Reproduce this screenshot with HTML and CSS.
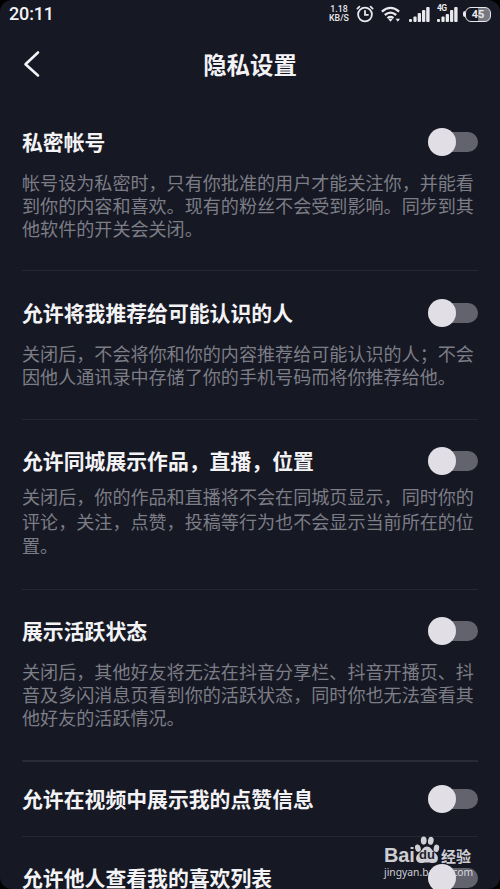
FILE: index.html
```
<!DOCTYPE html>
<html lang="zh-CN">
<head>
<meta charset="utf-8">
<title>隐私设置</title>
<link rel="stylesheet" href="styles.css">
</head>
<body>
<div class="screen">
  <header class="status">
    <span class="time">20:11</span>
    <div class="indicators">
      <span class="speed"><span>1.18</span><span>KB/S</span></span>
      <svg class="alarm" width="18" height="18" viewBox="0 0 18 18" fill="none" stroke="currentColor" stroke-width="1.8" stroke-linecap="round"><circle cx="9" cy="9.5" r="6.9"/><path d="M9 5.8v4h3M1.4 3.6l2-1.9M16.6 3.6l-2-1.9"/></svg>
      <svg class="wifi" width="20" height="17" viewBox="0 0 20 17" fill="none" stroke="currentColor" stroke-width="2.3"><path d="M.9 5.6Q9.5-1.9 18.1 5.6M3.8 9Q9.5 4.2 15.2 9M6.5 12.1Q9.5 9.8 12.5 12.1"/><path d="M7.4 13.3Q9.5 12 11.6 13.3L9.5 15.7zM14.6 12.8h4.4l-2.2 3z" fill="currentColor" stroke="none"/></svg>
      <svg class="signal" width="21" height="17" viewBox="0 0 21 17" fill="currentColor"><rect y="13" width="3" height="3" rx="1"/><rect x="4.4" y="10.5" width="3.2" height="5.5" rx="1"/><rect x="8.7" y="7" width="3.3" height="9" rx="1"/><rect x="13" y="4" width="3.3" height="12" rx="1"/><rect x="17.2" y="1" width="3.4" height="15" rx="1"/></svg>
      <span class="mobile"><svg width="21" height="17" viewBox="0 0 21 17" fill="currentColor"><rect y="13" width="3" height="3" rx="1"/><rect x="4.4" y="10.5" width="3.2" height="5.5" rx="1"/><rect x="8.7" y="8" width="3.3" height="8" rx="1"/><rect x="13" y="4" width="3.3" height="12" rx="1"/><rect x="17.2" y="1" width="3.4" height="15" rx="1"/></svg><b class="net">4G</b></span>
      <span class="battery"><i class="nub"></i><b class="level">45</b></span>
    </div>
  </header>
  <nav class="nav">
    <svg class="back" width="18" height="28" viewBox="0 0 18 28" fill="none" stroke="currentColor" stroke-width="2.6" stroke-linecap="round" stroke-linejoin="round"><path d="M15 2.5L2.5 14.3L15 25.5"/></svg>
    <h1>隐私设置</h1>
  </nav>
  <main>
    <section class="item first">
      <div class="row"><h2>私密帐号</h2><span class="switch"></span></div>
      <p>帐号设为私密时，只有你批准的用户才能关注你，并能看<br>到你的内容和喜欢。现有的粉丝不会受到影响。同步到其<br>他软件的开关会关闭。</p>
    </section>
    <section class="item">
      <div class="row"><h2>允许将我推荐给可能认识的人</h2><span class="switch"></span></div>
      <p>关闭后，不会将你和你的内容推荐给可能认识的人；不会<br>因他人通讯录中存储了你的手机号码而将你推荐给他。</p>
    </section>
    <section class="item loose">
      <div class="row"><h2>允许同城展示作品，直播，位置</h2><span class="switch"></span></div>
      <p>关闭后，你的作品和直播将不会在同城页显示，同时你的<br>评论，关注，点赞，投稿等行为也不会显示当前所在的位<br>置。</p>
    </section>
    <section class="item strong">
      <div class="row"><h2>展示活跃状态</h2><span class="switch"></span></div>
      <p>关闭后，其他好友将无法在抖音分享栏、抖音开播页、抖<br>音及多闪消息页看到你的活跃状态，同时你也无法查看其<br>他好友的活跃情况。</p>
    </section>
    <section class="item compact">
      <div class="row"><h2>允许在视频中展示我的点赞信息</h2><span class="switch"></span></div>
    </section>
    <section class="item last">
      <div class="row"><h2>允许他人查看我的喜欢列表</h2><span class="switch"></span></div>
    </section>
  </main>
  <div class="watermark">
    <div class="brand">
      <span class="bai">Bai</span>
      <span class="paw"><svg width="26" height="30" viewBox="0 0 26 30" fill="currentColor"><ellipse cx="3.9" cy="13.2" rx="2.8" ry="3.8" transform="rotate(-15 3.9 13.2)"/><ellipse cx="9.7" cy="5.6" rx="2.9" ry="4.1"/><ellipse cx="16.8" cy="5.8" rx="2.8" ry="4" transform="rotate(12 16.8 5.8)"/><ellipse cx="22.4" cy="13.4" rx="2.7" ry="3.8" transform="rotate(12 22.4 13.4)"/><path d="M13 11.5c3.5 0 4.8 3.6 7.3 5.8 2.6 2.2 4.2 4.2 3.5 7.2-.7 3.1-3.3 3.8-6.2 3.4-3.4-.5-5.8-.5-9 0-3.3.6-6-.5-6.5-3.8-.4-3 1.5-4.8 3.7-6.8 2.4-2.1 3.7-5.8 7.2-5.8z"/></svg><b class="du">du</b></span>
      <span class="jing">经验</span>
    </div>
    <span class="site">jingyan.baidu.com</span>
  </div>
</div>
</body>
</html>
```
FILE: styles.css
```
* { box-sizing: border-box; margin: 0; padding: 0; }
body { background: #000; font-family: "Noto Sans CJK SC", sans-serif; }
.screen {
  position: relative;
  width: 500px;
  height: 889px;
  overflow: hidden;
  border-radius: 12px;
  background: #161823;
  color: #f3f3f6;
}
.status { display: flex; justify-content: space-between; height: 28px; padding: 0 9px 0 9px; }
.time { font: 500 18px/28px Roboto, sans-serif; letter-spacing: -.15px; }
.indicators { display: flex; align-items: center; color: #e8e8ed; }
.speed { display: flex; flex-direction: column; align-items: center; width: 20px; margin-right: 7px; font: 500 8.8px/8.8px Roboto, sans-serif; white-space: nowrap; }
.alarm { margin-right: 7px; }
.wifi { margin-right: 8px; }
.signal { margin-right: 7px; }
.mobile { position: relative; display: flex; margin-right: 5px; }
.net { position: absolute; left: 0; top: -2px; font: 700 8.5px/9px Roboto, sans-serif; letter-spacing: -.6px; }
.battery { display: flex; align-items: center; }
.nub { width: 2px; height: 6px; border-radius: 2px 0 0 2px; background: #e8e8ed; }
.level {
  width: 26px;
  height: 15px;
  border: 1.5px solid #e8e8ed;
  border-radius: 6px;
  background: linear-gradient(90deg, #161823 52%, #777982 52%);
  font: 700 11px/13px Roboto, sans-serif;
  text-align: center;
}
.nav { display: grid; grid-template-columns: 60px 1fr 60px; align-items: center; height: 72px; }
.back { margin-left: 23px; }
.nav h1 { font-size: 23.4px; line-height: 34px; font-weight: 700; text-align: center; }
main { padding: 0 22px; }
.item { height: 149px; padding-top: 27px; border-bottom: 1px solid #252731; }
.first { height: 171px; }
.loose { height: 170px; }
.strong { height: 172px; padding-top: 26px; border-bottom: 2px solid #292b35; }
.compact { height: 75px; padding-top: 22px; }
.last { border: 0; padding-top: 26px; }
.row { display: flex; align-items: center; justify-content: space-between; height: 30px; }
.row h2 { padding-bottom: 2px; font-size: 20.85px; line-height: 28px; font-weight: 700; white-space: nowrap; }
.item p { margin-top: 14px; color: #7c7d86; font-size: 18.08px; line-height: 23.2px; white-space: nowrap; }
.loose { padding-top: 26px; }
.loose p { margin-top: 8px; line-height: 24.6px; }
.switch { display: flex; align-items: center; width: 50px; height: 28px; }
.switch::before { content: ""; flex: none; z-index: 1; width: 28px; height: 28px; border-radius: 50%; background: #e1dfe5; }
.switch::after { content: ""; flex: none; width: 42px; height: 20px; margin-left: -20px; border-radius: 10px; background: #62636d; }
.watermark { position: absolute; left: 384px; top: 835px; width: 90px; color: rgba(240, 240, 245, .85); }
.brand { display: flex; align-items: flex-end; height: 30px; }
.bai { width: 30px; font: 700 20px/20px "Liberation Sans", sans-serif; letter-spacing: -.1px; }
.paw { position: relative; width: 26px; height: 30px; }
.du { position: absolute; left: 5px; top: 12px; color: #20222d; font: 700 13px/16px "Liberation Sans", sans-serif; }
.jing { margin-left: 1px; font-size: 15px; line-height: 19px; font-weight: 700; white-space: nowrap; }
.site { display: block; font: 10.3px/14px "Noto Sans", sans-serif; white-space: nowrap; }
```
